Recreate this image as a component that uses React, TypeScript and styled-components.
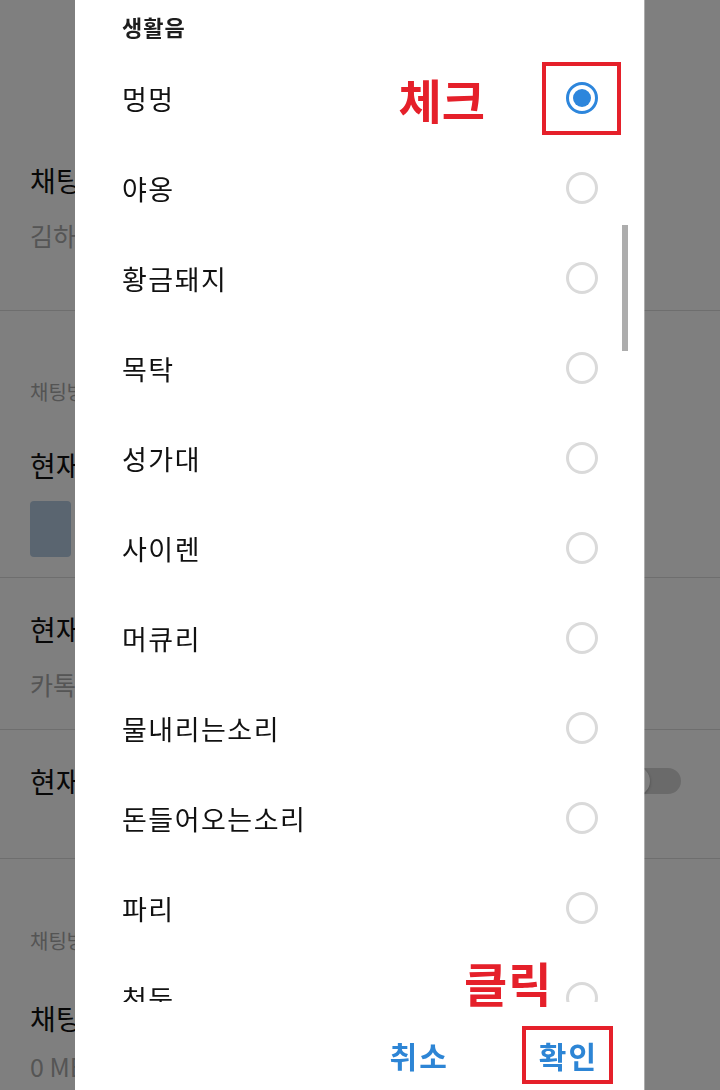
import React from 'react';
import styled, { createGlobalStyle } from 'styled-components';

const GlobalStyle = createGlobalStyle`
  html, body {
    margin: 0;
    padding: 0;
    background: #ffffff;
    font-family: "Noto Sans CJK KR", "Noto Sans", sans-serif;
  }
  * { box-sizing: border-box; }
`;

/* settings page behind the dialog */

const Page = styled.div`
  width: 720px;
  height: 1090px;
  overflow: hidden;
  padding-top: 140px;
  background: #ffffff;
`;

const Section = styled.section<{ $top: number; $bottom: number }>`
  padding: ${({ $top }) => $top}px 30px ${({ $bottom }) => $bottom}px;
  border-bottom: 1px solid #dcdcdc;

  &:last-child {
    border-bottom: none;
  }
`;

const GroupLabel = styled.div`
  font-size: 20px;
  line-height: 28px;
  color: #a8a8a8;
`;

const ItemTitle = styled.div<{ $gap?: number }>`
  margin-top: ${({ $gap }) => $gap ?? 0}px;
  font-size: 28px;
  line-height: 40px;
  color: #111111;
`;

const ItemSub = styled.div<{ $gap: number }>`
  margin-top: ${({ $gap }) => $gap}px;
  font-size: 25px;
  line-height: 34px;
  color: #aaaaaa;
  white-space: nowrap;
`;

const Swatch = styled.div`
  margin-top: 16px;
  width: 41px;
  height: 56px;
  border-radius: 4px;
  background: #b4cae0;
`;

const ToggleRow = styled.div`
  display: flex;
  align-items: center;
  justify-content: space-between;
  padding-right: 9px;
`;

const Toggle = styled.div`
  position: relative;
  width: 55px;
  height: 26px;
  border-radius: 13px;
  background: #d4d4d4;

  &::before {
    content: '';
    position: absolute;
    left: -6px;
    top: -2px;
    width: 30px;
    height: 30px;
    border-radius: 50%;
    background: #ffffff;
    box-shadow: 0 1px 3px rgba(0, 0, 0, 0.3);
  }
`;

const Dim = styled.div`
  position: fixed;
  inset: 0;
  background: rgba(0, 0, 0, 0.5);
`;

/* ringtone dialog */

const Dialog = styled.div`
  position: fixed;
  top: 0;
  left: 75px;
  width: 569px;
  height: 1090px;
  background: #ffffff;
  display: flex;
  flex-direction: column;
  box-shadow: 1px 0 0 rgba(255, 255, 255, 0.35);
`;

const DialogTitle = styled.div`
  height: 53px;
  padding-left: 47px;
  font-size: 22px;
  line-height: 52px;
  font-weight: 700;
  letter-spacing: 1px;
  color: #1e1e1e;
`;

const List = styled.div`
  height: 949px;
  overflow: hidden;
`;

const Row = styled.div`
  height: 90px;
  display: flex;
  align-items: center;
  padding: 0 23px 0 47px;
`;

const RowLabel = styled.div`
  flex: 1;
  font-size: 27px;
  letter-spacing: 1.5px;
  color: #111111;
  white-space: nowrap;
`;

const Note = styled.div`
  font-size: 47px;
  line-height: 1;
  font-weight: 700;
  color: #e5202a;
`;

const RowNote = styled(Note)`
  margin-right: 57px;
`;

const RadioCell = styled.div<{ $marked?: boolean }>`
  width: 79px;
  height: 73px;
  display: flex;
  align-items: center;
  justify-content: center;
  box-shadow: ${({ $marked }) => ($marked ? 'inset 0 0 0 4px #e5202a' : 'none')};
`;

const Radio = styled.div<{ $checked?: boolean }>`
  width: 32px;
  height: 32px;
  border-radius: 50%;
  border: 3px solid ${({ $checked }) => ($checked ? '#2d86dc' : '#dadada')};
  display: flex;
  align-items: center;
  justify-content: center;

  &::after {
    content: '';
    width: 18px;
    height: 18px;
    border-radius: 50%;
    background: ${({ $checked }) => ($checked ? '#2d86dc' : 'transparent')};
  }
`;

const Scrollbar = styled.div`
  position: absolute;
  left: 547px;
  top: 225px;
  width: 6px;
  height: 126px;
  background: #adadad;
`;

const ClickNote = styled(Note)`
  position: absolute;
  left: 389px;
  top: 958px;
  letter-spacing: 1px;
`;

const ButtonBar = styled.div`
  flex: 1;
  display: flex;
  justify-content: flex-end;
  align-items: flex-start;
  gap: 58px;
  padding: 24px 31px 0 0;
`;

const Button = styled.button<{ $marked?: boolean }>`
  height: 58px;
  padding: 0 15px 0 17px;
  border: none;
  background: transparent;
  font-family: inherit;
  font-size: 30px;
  font-weight: 700;
  letter-spacing: 2px;
  color: #2d85d5;
  box-shadow: ${({ $marked }) => ($marked ? 'inset 0 0 0 4px #e5202a' : 'none')};
`;

const SOUNDS = [
  '멍멍',
  '야옹',
  '황금돼지',
  '목탁',
  '성가대',
  '사이렌',
  '머큐리',
  '물내리는소리',
  '돈들어오는소리',
  '파리',
  '천둥',
  '빗소리',
];

const App: React.FC = () => {
  const selected = 0;

  return (
    <>
      <GlobalStyle />
      <Page>
        <Section $top={20} $bottom={58}>
          <ItemTitle>채팅방 이름</ItemTitle>
          <ItemSub $gap={18}>김하나</ItemSub>
        </Section>
        <Section $top={67} $bottom={20}>
          <GroupLabel>채팅방 설정</GroupLabel>
          <ItemTitle $gap={39}>현재 채팅방 배경화면</ItemTitle>
          <Swatch />
        </Section>
        <Section $top={31} $bottom={28}>
          <ItemTitle>현재 채팅방 알림음</ItemTitle>
          <ItemSub $gap={18}>카톡</ItemSub>
        </Section>
        <Section $top={31} $bottom={57}>
          <ToggleRow>
            <ItemTitle>현재 채팅방 상단 고정</ItemTitle>
            <Toggle />
          </ToggleRow>
        </Section>
        <Section $top={68} $bottom={0}>
          <GroupLabel>채팅방 관리</GroupLabel>
          <ItemTitle $gap={43}>채팅방 용량 관리</ItemTitle>
          <ItemSub $gap={11}>0 MB</ItemSub>
        </Section>
      </Page>

      <Dim />

      <Dialog>
        <DialogTitle>생활음</DialogTitle>
        <List>
          {SOUNDS.map((name, i) => (
            <Row key={name}>
              <RowLabel>{name}</RowLabel>
              {i === selected && <RowNote>체크</RowNote>}
              <RadioCell $marked={i === selected}>
                <Radio $checked={i === selected} />
              </RadioCell>
            </Row>
          ))}
        </List>
        <Scrollbar />
        <ClickNote>클릭</ClickNote>
        <ButtonBar>
          <Button>취소</Button>
          <Button $marked>확인</Button>
        </ButtonBar>
      </Dialog>
    </>
  );
};

export default App;
